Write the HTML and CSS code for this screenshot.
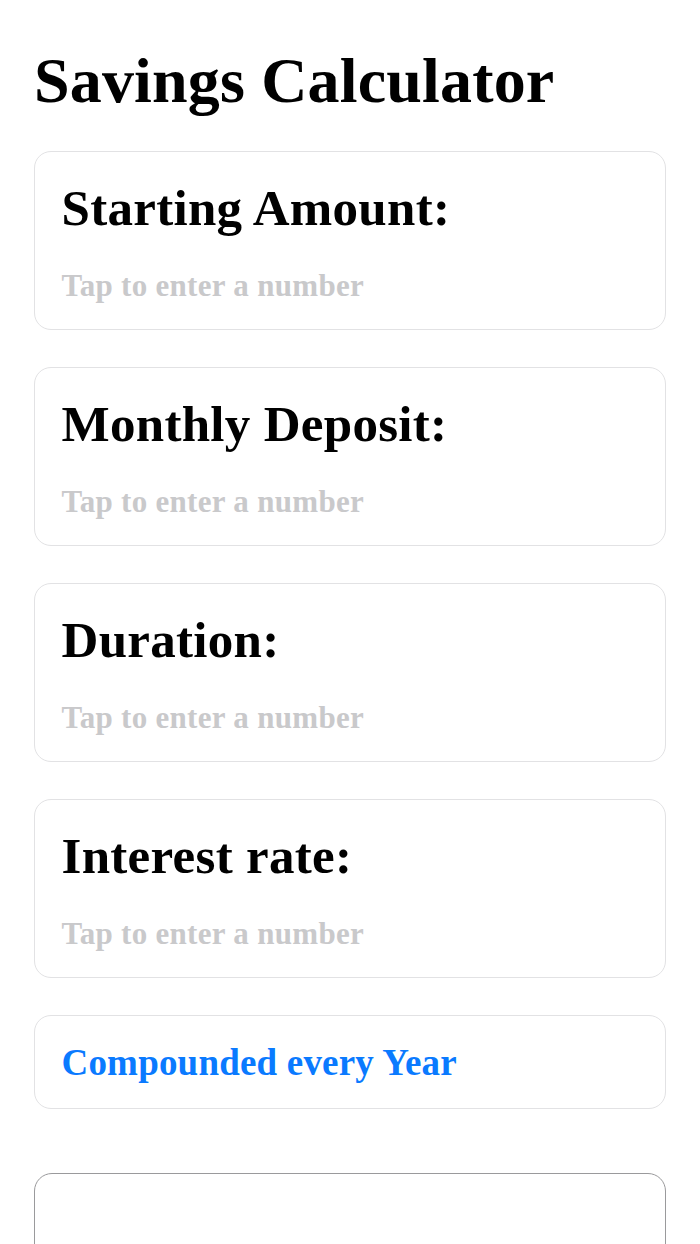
FILE: index.html
```html
<!DOCTYPE html>
<html lang="en">
<head>
<meta charset="utf-8">
<title>Savings Calculator</title>
<link rel="stylesheet" href="styles.css">
</head>
<body>
<main class="page">
  <h1 class="title">Savings Calculator</h1>
  <section class="card field">
    <div class="label">Starting Amount:</div>
    <div class="placeholder">Tap to enter a number</div>
  </section>
  <section class="card field">
    <div class="label">Monthly Deposit:</div>
    <div class="placeholder">Tap to enter a number</div>
  </section>
  <section class="card field">
    <div class="label">Duration:</div>
    <div class="placeholder">Tap to enter a number</div>
  </section>
  <section class="card field">
    <div class="label">Interest rate:</div>
    <div class="placeholder">Tap to enter a number</div>
  </section>
  <section class="card option">
    <div class="option-text">Compounded every Year</div>
  </section>
  <section class="card result"></section>
</main>
</body>
</html>
```
FILE: styles.css
```css
html, body {
  margin: 0;
  padding: 0;
  background: #ffffff;
}
body {
  font-family: "Liberation Serif", "DejaVu Serif", serif;
  color: #000;
  overflow: hidden;
  height: 1244px;
}
.page {
  padding: 44px 34px 0 34px;
  display: flex;
  flex-direction: column;
  height: 1244px;
  box-sizing: border-box;
  overflow: hidden;
}
.title {
  margin: 0 0 33px 0;
  font-size: 64px;
  line-height: 74px;
  font-weight: 700;
  letter-spacing: 0.17px;
}
.card {
  border: 1.5px solid #e2e2e4;
  border-radius: 17px;
  box-sizing: border-box;
  flex-shrink: 0;
}
.field {
  padding: 27px 27px 24px 26.5px;
  margin-bottom: 37px;
  height: 179px;
}
.label {
  font-size: 51px;
  line-height: 58px;
  font-weight: 700;
  letter-spacing: 0.3px;
}
.placeholder {
  margin-top: 31px;
  font-size: 31px;
  line-height: 36px;
  font-weight: 700;
  letter-spacing: 0.3px;
  color: #c9c9cb;
}
.option {
  padding: 25.5px 27px 23.5px 26.5px;
  height: 94px;
  margin-bottom: 64px;
}
.option-text {
  font-size: 37px;
  line-height: 42px;
  font-weight: 700;
  letter-spacing: 0.2px;
  color: #0a7aff;
}
.result {
  border-color: #9a9a9c;
  border-radius: 18px;
  height: 220px;
}
```
